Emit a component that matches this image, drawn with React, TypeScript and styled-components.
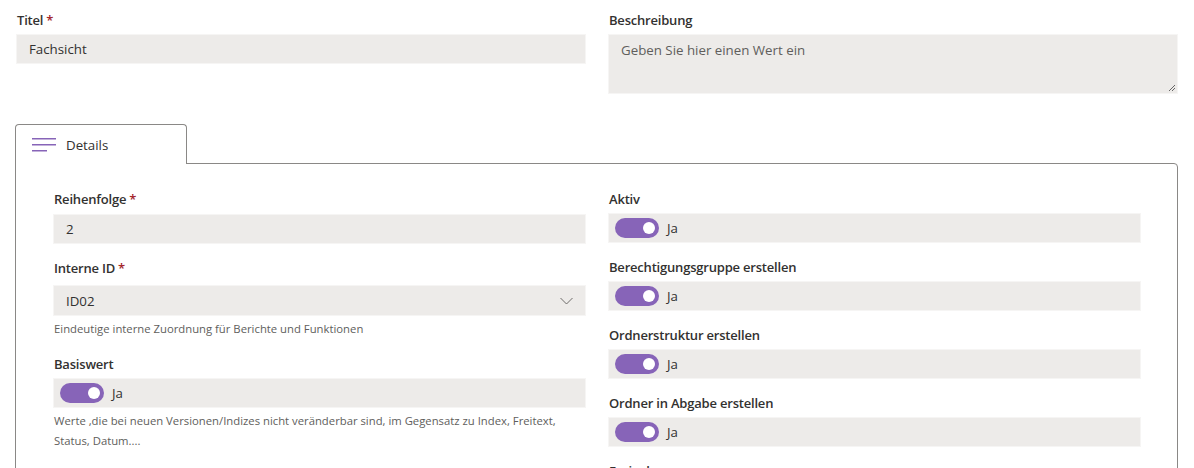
import React from "react";
import styled, { createGlobalStyle } from "styled-components";

const Global = createGlobalStyle`
  html, body { margin: 0; padding: 0; background: #ffffff; }
  body {
    font-family: "Segoe UI", "Open Sans", "Noto Sans", sans-serif;
    color: #323130;
    -webkit-font-smoothing: antialiased;
  }
  * { box-sizing: border-box; }
`;

const Page = styled.div`
  padding: 10px 17px 0 17px;
  height: 468px;
  overflow: hidden;
`;

const TwoCols = styled.div`
  display: grid;
  grid-template-columns: 1fr 1fr;
  column-gap: 24px;
  align-items: start;
`;

const Column = styled.div`
  display: flex;
  flex-direction: column;
  gap: 15px;
  min-width: 0;
`;

const Field = styled.div`
  display: flex;
  flex-direction: column;
`;

const Label = styled.label`
  font-size: 13px;
  font-weight: 600;
  letter-spacing: -0.2px;
  line-height: 20px;
  padding-bottom: 5px;
  color: #323130;
  white-space: nowrap;
`;

const Req = styled.span`
  color: #a4262c;
  margin-left: 3px;
`;

const Box = styled.div<{ $h?: number; $offset?: number }>`
  height: ${(p) => p.$h ?? 28}px;
  margin-top: ${(p) => p.$offset ?? 0}px;
  background: #edebe9;
  box-shadow: 0 0 0 1px #f6f5f4;
  display: flex;
  align-items: center;
  padding: 0 12px;
  font-size: 13.3px;
  color: #323130;
`;

const Area = styled.div`
  position: relative;
  height: 58px;
  background: #edebe9;
  box-shadow: 0 0 0 1px #f6f5f4;
  padding: 5px 12px;
  font-size: 13.3px;
  line-height: 20px;
  color: #605e5c;
`;

const Grip = styled.svg`
  position: absolute;
  right: 1px;
  bottom: 1px;
`;

const Select = styled(Box)`
  justify-content: space-between;
`;

const ToggleRow = styled(Box)`
  padding: 0 6px;
  gap: 8px;
`;

const Switch = styled.span`
  width: 44px;
  height: 20px;
  border-radius: 10px;
  background: #8764b8;
  display: flex;
  align-items: center;
  justify-content: flex-end;
  padding-right: 4px;
  flex: none;
`;

const Knob = styled.span`
  width: 12px;
  height: 12px;
  border-radius: 50%;
  background: #ffffff;
`;

const Help = styled.div`
  font-size: 11.3px;
  line-height: 20px;
  color: #605e5c;
  margin-top: 4px;
`;

const TabStrip = styled.div`
  margin-top: 31px;
  margin-left: -2px;
  margin-right: -1px;
  display: flex;
`;

const Tab = styled.div`
  width: 172px;
  height: 40px;
  border: 1px solid #8a8886;
  border-bottom: none;
  border-radius: 4px 4px 0 0;
  background: #ffffff;
  margin-bottom: -1px;
  position: relative;
  z-index: 1;
  display: flex;
  align-items: center;
  gap: 10px;
  padding-left: 16px;
  font-size: 13.3px;
  color: #323130;
`;

const Panel = styled.div`
  margin-left: -2px;
  margin-right: -1px;
  border: 1px solid #8a8886;
  border-radius: 0 4px 0 0;
  padding: 25px 37px 40px 38px;
`;

const Hamburger = () => (
  <svg width="24" height="14" viewBox="0 0 24 14">
    <rect x="0" y="0" width="24" height="1.5" fill="#8764b8" />
    <rect x="0" y="6" width="24" height="1.5" fill="#8764b8" />
    <rect x="0" y="12" width="15" height="1.5" fill="#8764b8" />
  </svg>
);

const Chevron = () => (
  <svg width="13" height="8" viewBox="0 0 13 8">
    <path d="M0.5 1 L6.5 7 L12.5 1" fill="none" stroke="#605e5c" strokeWidth="0.9" />
  </svg>
);

const Toggle = () => (
  <ToggleRow>
    <Switch>
      <Knob />
    </Switch>
    Ja
  </ToggleRow>
);

const rightItems = [
  "Aktiv",
  "Berechtigungsgruppe erstellen",
  "Ordnerstruktur erstellen",
  "Ordner in Abgabe erstellen",
];

export default function App() {
  return (
    <>
      <Global />
      <Page>
        <TwoCols>
          <Field>
            <Label>
              Titel<Req>*</Req>
            </Label>
            <Box>Fachsicht</Box>
          </Field>
          <Field>
            <Label>Beschreibung</Label>
            <Area>
              Geben Sie hier einen Wert ein
              <Grip width="9" height="9" viewBox="0 0 9 9">
                <path d="M8 2 L2 8 M8 5 L5 8" stroke="#666" strokeWidth="1" />
              </Grip>
            </Area>
          </Field>
        </TwoCols>

        <TabStrip>
          <Tab>
            <Hamburger />
            Details
          </Tab>
        </TabStrip>
        <Panel>
          <TwoCols>
            <Column>
              <Field>
                <Label>
                  Reihenfolge<Req>*</Req>
                </Label>
                <Box $offset={1}>2</Box>
              </Field>
              <Field>
                <Label>
                  Interne ID<Req>*</Req>
                </Label>
                <Select $h={29} $offset={3}>
                  ID02
                  <Chevron />
                </Select>
                <Help>Eindeutige interne Zuordnung für Berichte und Funktionen</Help>
              </Field>
              <Field>
                <Label>Basiswert</Label>
                <Toggle />
                <Help>
                  Werte ,die bei neuen Versionen/Indizes nicht veränderbar sind, im Gegensatz zu Index, Freitext,
                  Status, Datum....
                </Help>
              </Field>
              <Field>
                <Label>Basis-Einstufung</Label>
                <Box />
              </Field>
            </Column>
            <Column>
              {rightItems.map((t) => (
                <Field key={t}>
                  <Label>{t}</Label>
                  <Toggle />
                </Field>
              ))}
              <Field>
                <Label>Freigabe</Label>
                <Toggle />
              </Field>
            </Column>
          </TwoCols>
        </Panel>
      </Page>
    </>
  );
}
